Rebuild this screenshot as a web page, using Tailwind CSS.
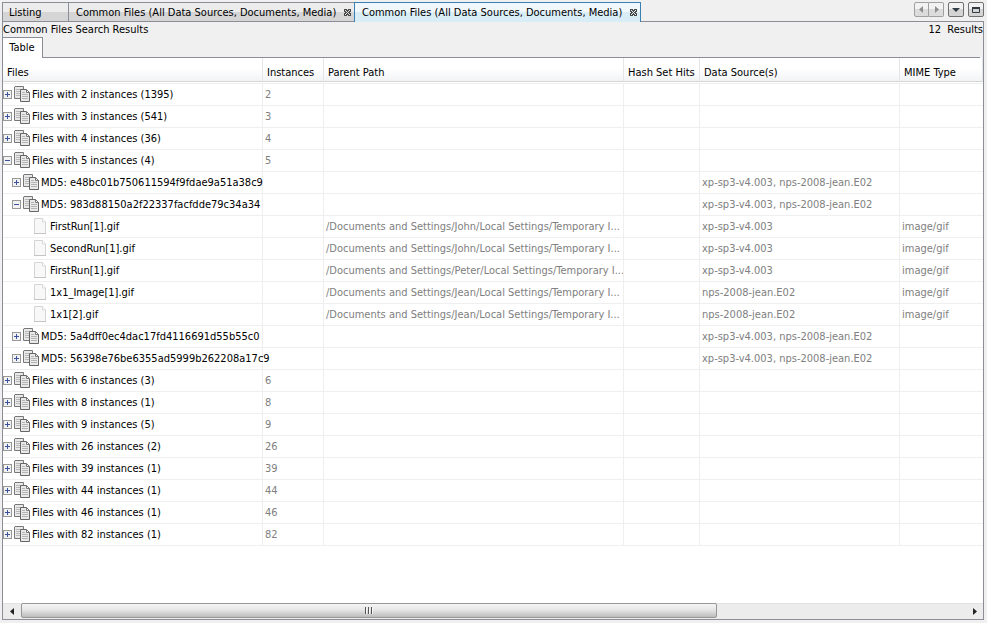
<!DOCTYPE html>
<html lang="en">
<head>
  <meta charset="UTF-8" />
  <meta name="viewport" content="width=device-width, initial-scale=1.0"/>
  <title>Common Files Search Results</title>
  <script src="https://cdn.jsdelivr.net/npm/@tailwindcss/browser@4"></script>
</head>
<body class="h-screen flex flex-col bg-[#f0f0f0] pt-0.5 pl-0.5 pr-[3px] pb-[3px] font-['Tahoma','DejaVu_Sans_Condensed',sans-serif] text-[11px] leading-[14px] text-black">

  <!-- Window tabs -->
  <div class="flex h-5 shrink-0">
    <div role="tablist" class="flex">
      <button role="tab" class="w-[66px] pl-1.5 pt-px text-left border border-r-0 border-[#8b8d98] bg-linear-to-b from-[#ececec] from-50% to-[#d5d5d5] to-50%">Listing</button>
      <div class="w-[286px] flex items-center pl-[7px] pr-[3px] pt-px border border-r-0 border-[#8b8d98] bg-linear-to-b from-[#ececec] from-50% to-[#d5d5d5] to-50%">
        <button role="tab" class="flex-1 text-left whitespace-nowrap">Common Files (All Data Sources, Documents, Media)</button>
        <button aria-label="Close tab"><svg class="w-[7px] h-[7px]" viewBox="0 0 7 7" shape-rendering="crispEdges"><path d="M0 0h7v7H0z" fill="#4a4a4a"/><path d="M3 0h1v1H3zM1 1h1v1H1zM5 1h1v1H5zM2 2h1v1H2zM4 2h1v1H4zM0 3h1v1H0zM3 3h1v1H3zM6 3h1v1H6zM2 4h1v1H2zM4 4h1v1H4zM1 5h1v1H1zM5 5h1v1H5zM3 6h1v1H3z" fill="#dcdcdc"/></svg></button>
      </div>
      <div class="w-[287px] flex items-center pl-[7px] pr-[3px] border border-b-0 border-[#3c7fb1] bg-linear-to-b from-[#f0f8fc] from-50% to-[#d9edf7] to-50%">
        <button role="tab" aria-selected="true" class="flex-1 text-left whitespace-nowrap">Common Files (All Data Sources, Documents, Media)</button>
        <button aria-label="Close tab"><svg class="w-[7px] h-[7px]" viewBox="0 0 7 7" shape-rendering="crispEdges"><path d="M0 0h7v7H0z" fill="#4a4a4a"/><path d="M3 0h1v1H3zM1 1h1v1H1zM5 1h1v1H5zM2 2h1v1H2zM4 2h1v1H4zM0 3h1v1H0zM3 3h1v1H3zM6 3h1v1H6zM2 4h1v1H2zM4 4h1v1H4zM1 5h1v1H1zM5 5h1v1H5zM3 6h1v1H3z" fill="#e4f1f8"/></svg></button>
      </div>
    </div>
    <div class="flex-1 flex justify-end items-start gap-1 border-b border-[#8b8d98]">
      <div class="flex">
        <button aria-label="Previous tab" disabled class="w-[15px] h-[15px] flex items-center justify-center rounded-l-xs border border-[#a0a0a0] bg-linear-to-b from-[#f2f2f2] from-50% to-[#dcdcdc] to-50%"><svg class="size-[7px]" viewBox="0 0 7 7"><path d="M5 0v7L1 3.500z" fill="#8e8e8e"/></svg></button>
        <button aria-label="Next tab" disabled class="w-[15px] h-[15px] flex items-center justify-center rounded-r-xs border border-l-0 border-[#a0a0a0] bg-linear-to-b from-[#f2f2f2] from-50% to-[#dcdcdc] to-50%"><svg class="size-[7px]" viewBox="0 0 7 7"><path d="M2 0v7l4-3.500z" fill="#8e8e8e"/></svg></button>
      </div>
      <button aria-label="Tab list" class="w-4 h-[15px] flex items-center justify-center rounded-xs border border-[#707070] bg-linear-to-b from-[#f2f2f2] from-50% to-[#d4d4d4] to-50%"><svg class="w-2 h-1" viewBox="0 0 8 4"><path d="M0 0h8L4 4z" fill="#333c42"/></svg></button>
      <button aria-label="Maximize" class="w-4 h-[15px] flex items-center justify-center rounded-xs border border-[#707070] bg-linear-to-b from-[#f2f2f2] from-50% to-[#d4d4d4] to-50%"><svg class="w-2 h-1.5" viewBox="0 0 8 6"><path d="M.5 1v4.500h7V1" fill="none" stroke="#333c42"/><path d="M0 0h8v2H0z" fill="#333c42"/></svg></button>
    </div>
  </div>

  <main class="flex-1 min-h-0 flex flex-col border border-t-0 border-[#8b8d98]">
    <div class="flex justify-between h-[15px] pt-px shrink-0">
      <h1>Common Files Search Results</h1>
      <span class="whitespace-pre">12  Results</span>
    </div>

    <div role="tablist" class="flex h-[21px] pr-[3px] shrink-0">
      <button role="tab" aria-selected="true" class="w-10 pr-px border border-b-0 border-l-0 border-[#8b8d98] bg-white">Table</button>
      <div class="flex-1 border-b border-[#8b8d98]"></div>
    </div>

    <div class="flex-1 min-h-0 overflow-hidden bg-white">
      <table class="w-full table-fixed border-separate border-spacing-0">
        <colgroup>
          <col class="w-[260px]"><col class="w-[61px]"><col class="w-[300px]"><col class="w-[76px]"><col class="w-[200px]"><col>
        </colgroup>
        <thead>
          <tr id="head"></tr>
        </thead>
        <tbody id="rows"></tbody>
      </table>
    </div>

    <!-- Horizontal scrollbar -->
    <div class="flex h-4 shrink-0 bg-[#ececec] border-t border-[#e2e2e2]">
      <button aria-label="Scroll left" class="w-[18px] pr-px flex items-center justify-center"><svg class="w-1 h-[7px]" viewBox="0 0 4 7"><path d="M4 0v7L0 3.500z" fill="#222"/></svg></button>
      <div class="flex-1 -mt-px">
        <div class="w-[73.6%] h-[15px] flex items-center justify-center rounded-xs border border-[#979797] bg-linear-to-b from-[#f5f5f5] via-[#e6e6e6] via-45% to-[#bcbcbc]">
          <svg class="w-2 h-[7px]" viewBox="0 0 8 7"><path d="M.5 0v7M3.500 0v7M6.500 0v7" stroke="#555"/><path d="M1.500 1v6M4.500 1v6M7.500 1v6" stroke="#fff" stroke-opacity=".7"/></svg>
        </div>
      </div>
      <button aria-label="Scroll right" class="w-4 flex items-center justify-center"><svg class="w-1 h-[7px]" viewBox="0 0 4 7"><path d="M0 0v7l4-3.500z" fill="#222"/></svg></button>
    </div>
  </main>

  <script>
    const $ = id => document.getElementById(id);

    const columns = ["Files", "Instances", "Parent Path", "Hash Set Hits", "Data Source(s)", "MIME Type"];
    const both = "xp-sp3-v4.003, nps-2008-jean.E02";

    // level 0 = instance group, 1 = MD5 group, 2 = file
    const rows = [
      { level: 0, name: "Files with 2 instances (1395)", count: 2 },
      { level: 0, name: "Files with 3 instances (541)", count: 3 },
      { level: 0, name: "Files with 4 instances (36)", count: 4 },
      { level: 0, name: "Files with 5 instances (4)", count: 5, open: true },
      { level: 1, name: "MD5: e48bc01b750611594f9fdae9a51a38c9", source: both },
      { level: 1, name: "MD5: 983d88150a2f22337facfdde79c34a34", source: both, open: true },
      { level: 2, name: "FirstRun[1].gif", path: "/Documents and Settings/John/Local Settings/Temporary I...", source: "xp-sp3-v4.003", mime: "image/gif" },
      { level: 2, name: "SecondRun[1].gif", path: "/Documents and Settings/John/Local Settings/Temporary I...", source: "xp-sp3-v4.003", mime: "image/gif" },
      { level: 2, name: "FirstRun[1].gif", path: "/Documents and Settings/Peter/Local Settings/Temporary I...", source: "xp-sp3-v4.003", mime: "image/gif" },
      { level: 2, name: "1x1_Image[1].gif", path: "/Documents and Settings/Jean/Local Settings/Temporary I...", source: "nps-2008-jean.E02", mime: "image/gif" },
      { level: 2, name: "1x1[2].gif", path: "/Documents and Settings/Jean/Local Settings/Temporary I...", source: "nps-2008-jean.E02", mime: "image/gif" },
      { level: 1, name: "MD5: 5a4dff0ec4dac17fd4116691d55b55c0", source: both },
      { level: 1, name: "MD5: 56398e76be6355ad5999b262208a17c9", source: both },
      { level: 0, name: "Files with 6 instances (3)", count: 6 },
      { level: 0, name: "Files with 8 instances (1)", count: 8 },
      { level: 0, name: "Files with 9 instances (5)", count: 9 },
      { level: 0, name: "Files with 26 instances (2)", count: 26 },
      { level: 0, name: "Files with 39 instances (1)", count: 39 },
      { level: 0, name: "Files with 44 instances (1)", count: 44 },
      { level: 0, name: "Files with 46 instances (1)", count: 46 },
      { level: 0, name: "Files with 82 instances (1)", count: 82 },
    ];

    const indent = ["pl-0", "pl-[9px]", "pl-[29px]"];

    const copiesIcon = `
      <svg class="size-4 shrink-0" viewBox="0 0 16 16" fill="none">
        <path d="M1 .5h8.500v12H.5V1z" fill="#e9e9e9" stroke="#777"/>
        <path d="M2 3.500h5M2 5.500h4M2 7.500h4M2 9.500h4" stroke="#b8b8b8"/>
        <path d="M6.500 3.500h6l3 3v9h-9z" fill="#e9e9e9" stroke="#666"/>
        <path d="M12.500 3.500v3h3z" fill="#fff" stroke="#777"/>
        <path d="M8 6.500h3M8 8.500h6M8 10.500h6M8 12.500h6" stroke="#b4b4b4"/>
      </svg>`;

    const fileIcon = `
      <svg class="size-4 shrink-0" viewBox="0 0 16 16">
        <path d="M2.500.5h8l3 3.500v11.500h-11z" fill="#f8f8f8" stroke="#d4d4d4"/>
        <path d="M10.500.5V4h3" fill="#fff" stroke="#d8d8d8"/>
        <path d="M2 15.500h12" stroke="#c4c4c4"/>
      </svg>`;

    const expander = open => `
      <button class="size-[9px] mr-0.5 shrink-0" aria-label="${open ? "Collapse" : "Expand"}">
        <svg class="size-[9px]" viewBox="0 0 9 9" shape-rendering="crispEdges">
          <rect x=".5" y=".5" width="8" height="8" fill="#f2f2f2" stroke="#989898"/>
          <path d="${open ? "M2 4.500h5" : "M2 4.500h5M4.500 2v5"}" stroke="#3a50a0"/>
        </svg>
      </button>`;

    $("head").innerHTML = columns.map(name => `
      <th class="h-[26px] p-0 align-top text-left font-normal border-b border-[#efefef]">
        <div class="h-6 pl-1 pt-2 whitespace-nowrap overflow-hidden border-b border-r border-b-[#d5d5d5] border-r-[#e4e5e7] bg-linear-to-b from-white from-45% to-[#f2f3f5]">${name}</div>
      </th>`).join("");

    const cell = text => `<td class="h-[22px] p-0 pl-0.5 whitespace-nowrap overflow-hidden border-b border-r last:border-r-0 border-[#efefef] text-[#808080]">${text ?? ""}</td>`;

    $("rows").innerHTML = rows.map(row => `
      <tr>
        <td class="h-[22px] p-0 align-top border-b border-r border-[#efefef]">
          <div class="flex items-center h-5 ${indent[row.level]}">
            ${row.level < 2 ? expander(row.open) + copiesIcon : fileIcon}
            <span class="pl-0.5 pt-px whitespace-nowrap">${row.name}</span>
          </div>
        </td>
        ${cell(row.count)}${cell(row.path)}${cell()}${cell(row.source)}${cell(row.mime)}
      </tr>`).join("");
  </script>
</body>
</html>
